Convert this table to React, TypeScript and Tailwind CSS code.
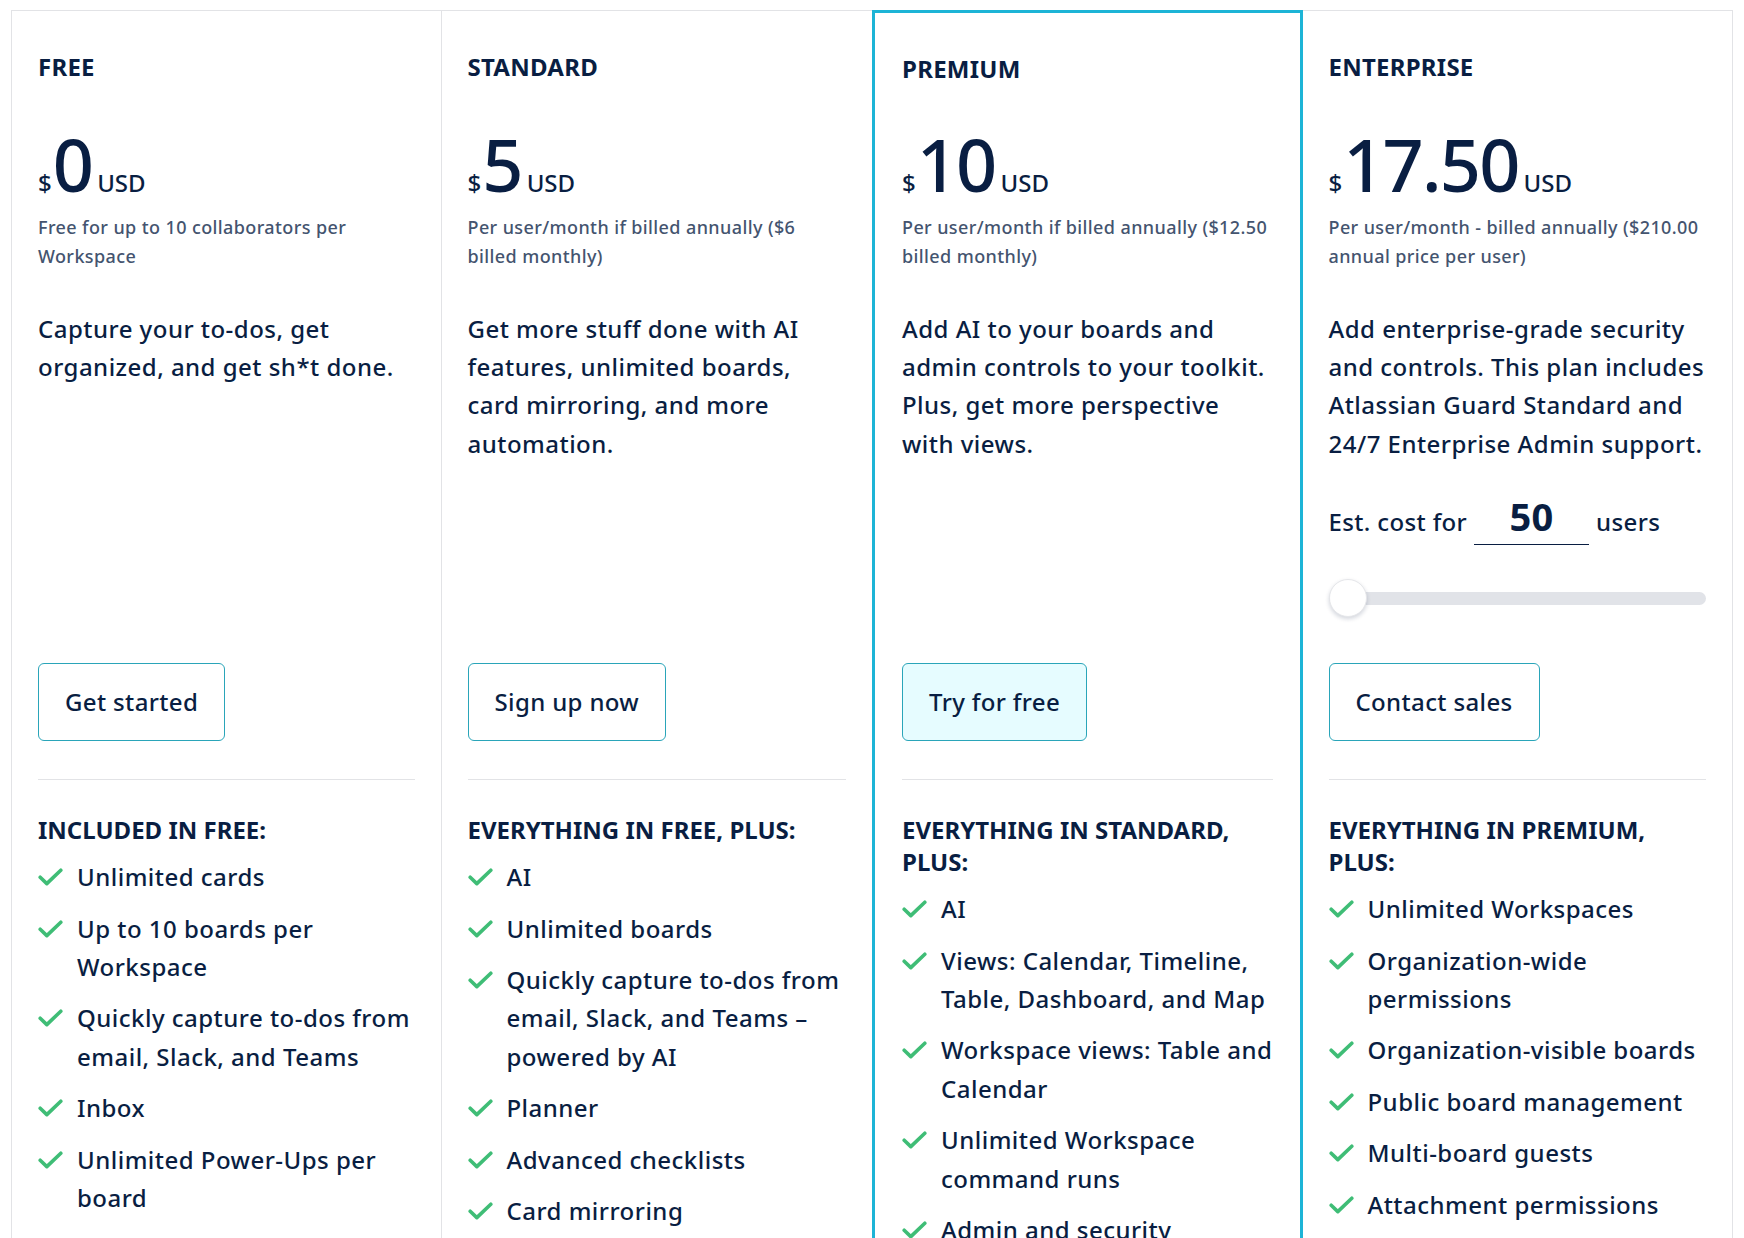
import React from "react";

type Plan = {
  name: string;
  price: string;
  small: string;
  desc: string;
  button: string;
  featuresTitle: string;
  features: string[];
  premium?: boolean;
  enterprise?: boolean;
};

const plans: Plan[] = [
  {
    name: "FREE",
    price: "0",
    small: "Free for up to 10 collaborators per Workspace",
    desc: "Capture your to-dos, get organized, and get sh*t done.",
    button: "Get started",
    featuresTitle: "INCLUDED IN FREE:",
    features: [
      "Unlimited cards",
      "Up to 10 boards per Workspace",
      "Quickly capture to-dos from email, Slack, and Teams",
      "Inbox",
      "Unlimited Power-Ups per board",
      "Unlimited storage (10MB/file)",
      "10 Workspace command runs per month",
      "Custom backgrounds & stickers",
    ],
  },
  {
    name: "STANDARD",
    price: "5",
    small: "Per user/month if billed annually ($6 billed monthly)",
    desc: "Get more stuff done with AI features, unlimited boards, card mirroring, and more automation.",
    button: "Sign up now",
    featuresTitle: "EVERYTHING IN FREE, PLUS:",
    features: [
      "AI",
      "Unlimited boards",
      "Quickly capture to-dos from email, Slack, and Teams – powered by AI",
      "Planner",
      "Advanced checklists",
      "Card mirroring",
      "Custom Fields",
      "Unlimited storage (250MB/file)",
    ],
  },
  {
    name: "PREMIUM",
    price: "10",
    small: "Per user/month if billed annually ($12.50 billed monthly)",
    desc: "Add AI to your boards and admin controls to your toolkit. Plus, get more perspective with views.",
    button: "Try for free",
    featuresTitle: "EVERYTHING IN STANDARD, PLUS:",
    features: [
      "AI",
      "Views: Calendar, Timeline, Table, Dashboard, and Map",
      "Workspace views: Table and Calendar",
      "Unlimited Workspace command runs",
      "Admin and security features",
      "Workspace-level templates",
      "Collections",
    ],
    premium: true,
  },
  {
    name: "ENTERPRISE",
    price: "17.50",
    small: "Per user/month - billed annually ($210.00 annual price per user)",
    desc: "Add enterprise-grade security and controls. This plan includes Atlassian Guard Standard and 24/7 Enterprise Admin support.",
    button: "Contact sales",
    featuresTitle: "EVERYTHING IN PREMIUM, PLUS:",
    features: [
      "Unlimited Workspaces",
      "Organization-wide permissions",
      "Organization-visible boards",
      "Public board management",
      "Multi-board guests",
      "Attachment permissions",
      "Power-Up administration",
    ],
    enterprise: true,
  },
];

function Check() {
  return (
    <svg width="25" height="18" viewBox="0 0 25 18" className="mt-[10px] shrink-0" aria-hidden>
      <path d="M2.2 9.2 L8.8 15.6 L22.8 2.2" fill="none" stroke="#3fbd76" strokeWidth="3.6" strokeLinecap="round" strokeLinejoin="round" />
    </svg>
  );
}

function Column({ p, first }: { p: Plan; first: boolean }) {
  const frame = p.premium
    ? "border-[3px] border-[#1db4d6] px-[27px]"
    : `border-t border-[#e2e3e6] ${first ? "border-l" : ""} ${p.name === "STANDARD" ? "" : "border-r"} px-[26px]`;
  return (
    <div className={`row-span-3 grid grid-rows-subgrid ${frame}`}>
      <div className="flex flex-col pb-[46px] pt-[40px]">
        <div className="text-[24px] font-bold leading-8 tracking-[0.01em] text-[#091e42]">{p.name}</div>
        <div className={`flex items-baseline text-[#091e42] ${p.premium ? "mt-[43px]" : "mt-[45px]"}`}>
          <span className="text-[24px] font-medium leading-none">$</span>
          <span className="ml-px text-[72px] font-medium leading-none tracking-[-0.025em]">{p.price}</span>
          <span className="ml-[5px] text-[24px] font-medium leading-none">USD</span>
        </div>
        <p className="mt-[13px] text-[18px] font-medium leading-[28.8px] tracking-[0.022em] text-[#44546f]">{p.small}</p>
        <p className="mt-[39px] text-[24px] font-medium leading-[38.4px] tracking-[0.02em] text-[#091e42]">{p.desc}</p>
        {p.enterprise && (
          <>
            <div className="mt-[28px] flex items-baseline text-[24px] font-medium tracking-[0.015em] text-[#091e42]">
              <span>Est. cost for</span>
              <div className="mx-[7px] w-[115px] border-b border-[#091e42] pb-[3px] text-center text-[38px] font-bold leading-[50px]">
                50
              </div>
              <span>users</span>
            </div>
            <div className="relative mt-[34px] h-[38px]">
              <div className="absolute left-0 right-0 top-[13px] h-[13px] rounded-full bg-[#e1e3e8]" />
              <div className="absolute left-0 top-0 h-[38px] w-[38px] rounded-full border border-[#e6e7ea] bg-white shadow-[0_2px_4px_rgba(9,30,66,0.18)]" />
            </div>
          </>
        )}
      </div>
      <div>
        <button
          className={`flex h-[78px] items-center rounded-[6px] border border-[#2aa5b9] px-[26px] text-[24px] font-medium tracking-[0.015em] text-[#091e42] ${
            p.premium ? "bg-[#e6fcff]" : "bg-white"
          }`}
        >
          {p.button}
        </button>
      </div>
      <div>
        <div className="mt-[38px] border-t border-[#e2e3e6]" />
        <div className="mt-[34px] text-[24px] font-bold leading-8 text-[#091e42]">{p.featuresTitle}</div>
        <ul className="mt-3 flex flex-col gap-[13px] pb-10">
          {p.features.map((f) => (
            <li key={f} className="flex gap-[14px] text-[24px] font-medium leading-[38.4px] tracking-[0.02em] text-[#091e42]">
              <Check />
              <span>{f}</span>
            </li>
          ))}
        </ul>
      </div>
    </div>
  );
}

export default function App() {
  return (
    <div className="min-h-screen bg-white px-[11px] pt-[10px]" style={{ fontFamily: '"Noto Sans", "Open Sans", sans-serif' }}>
      <div className="grid grid-cols-4 grid-rows-[auto_auto_auto]">
        {plans.map((p, i) => (
          <Column key={p.name} p={p} first={i === 0} />
        ))}
      </div>
    </div>
  );
}
